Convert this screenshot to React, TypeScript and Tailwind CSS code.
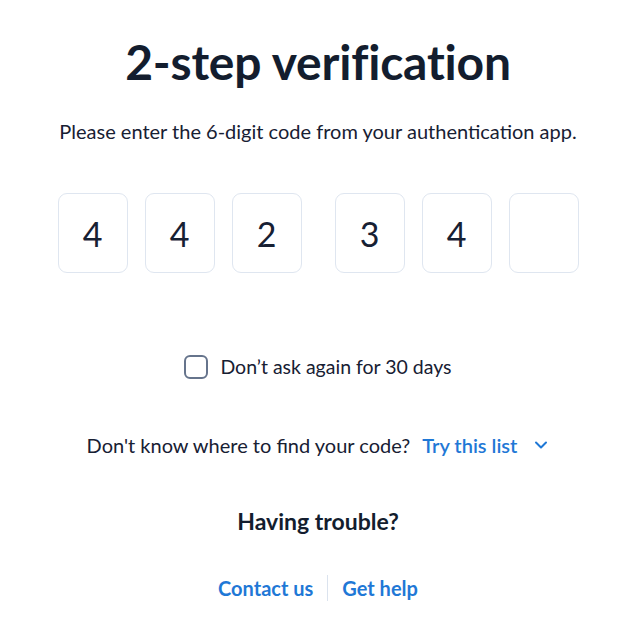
import { useState } from "react";

const DIGITS = ["4", "4", "2", "3", "4", ""];

function CodeBox({ value }: { value: string }) {
  return (
    <div className="flex h-[80px] w-[70px] items-center justify-center rounded-[9px] border border-[#dfe6f0] bg-white text-[34px] text-[#172033]">
      {value}
    </div>
  );
}

export default function App() {
  const [remember, setRemember] = useState(false);

  return (
    <div className="min-h-screen bg-white pl-[14px] font-['Lato','Liberation_Sans',sans-serif] text-[#172033]">
      <div className="flex flex-col items-center pt-[34px]">
        <h1 className="text-[48px] font-bold leading-[56px] tracking-[-0.2px] text-[#131d2e]">
          2-step verification
        </h1>
        <p className="mt-[29px] text-[20px] leading-[24px]">
          Please enter the 6-digit code from your authentication app.
        </p>

        {/* Code inputs */}
        <div className="mt-[50px] flex gap-[33px]">
          <div className="flex gap-[17px]">
            {DIGITS.slice(0, 3).map((d, i) => (
              <CodeBox key={i} value={d} />
            ))}
          </div>
          <div className="flex gap-[17px]">
            {DIGITS.slice(3).map((d, i) => (
              <CodeBox key={i} value={d} />
            ))}
          </div>
        </div>

        {/* Remember */}
        <label className="mt-[82px] flex cursor-pointer items-center gap-[12px]">
          <span
            onClick={() => setRemember(!remember)}
            className="h-[24px] w-[24px] rounded-[6px] border-[2.5px] border-[#66748c] bg-white"
          />
          <span className="text-[19.5px] leading-[24px]">Don’t ask again for 30 days</span>
        </label>

        <div className="mt-[54px] flex items-center text-[20px] leading-[24px]">
          <span>Don't know where to find your code?</span>
          <span className="ml-[12px] font-semibold text-[#1f78d6]">Try this list</span>
          <svg
            className="ml-[16px] h-[16px] w-[16px] text-[#1f78d6]"
            viewBox="0 0 16 16"
            fill="none"
            stroke="currentColor"
            strokeWidth="2"
            strokeLinecap="round"
            strokeLinejoin="round"
          >
            <path d="M3 5.5l5 5 5-5" />
          </svg>
        </div>

        <h2 className="mt-[50px] text-[23px] font-bold leading-[28px] text-[#131d2e]">
          Having trouble?
        </h2>

        <div className="mt-[40px] flex items-center text-[20px] font-bold leading-[26px] text-[#1f78d6]">
          <a className="pr-[14px]">Contact us</a>
          <span className="h-[26px] w-px bg-[#dbe3ee]" />
          <a className="pl-[14px]">Get help</a>
        </div>
      </div>
    </div>
  );
}
